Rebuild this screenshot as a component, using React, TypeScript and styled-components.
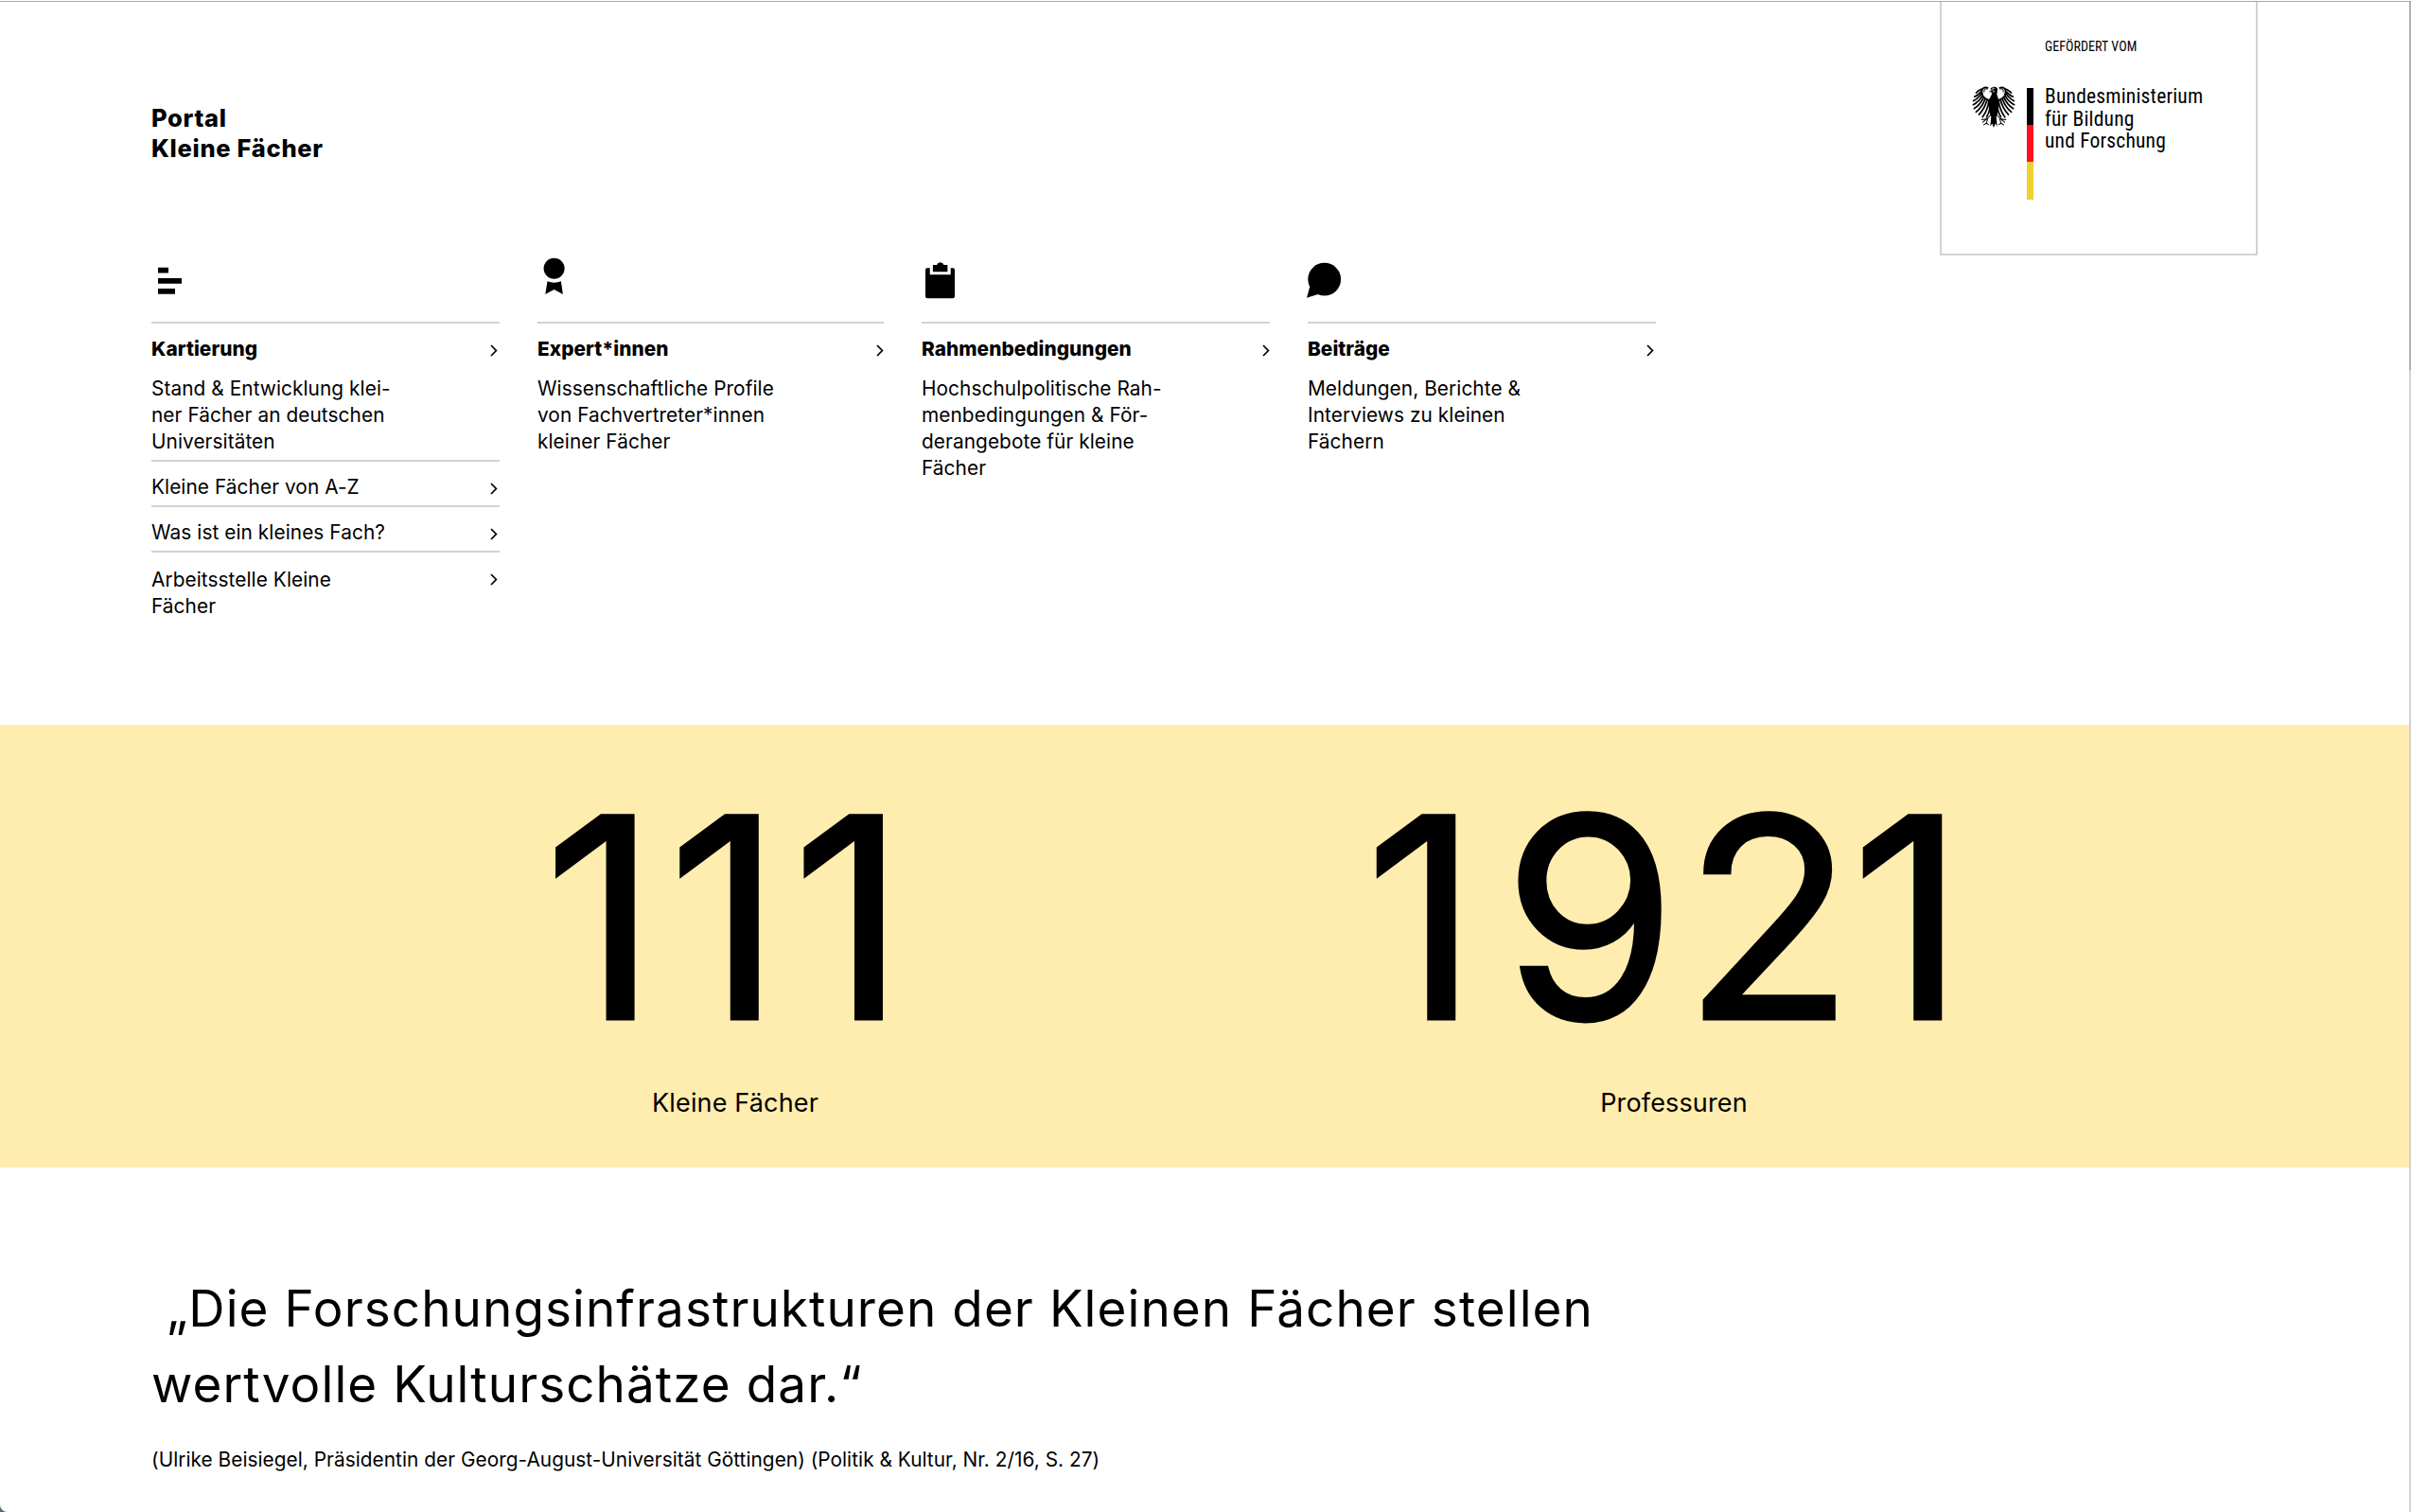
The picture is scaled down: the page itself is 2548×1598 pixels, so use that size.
import React from "react";
import styled, { createGlobalStyle } from "styled-components";

const RULE = "#d2d2d2";

const GlobalStyle = createGlobalStyle`
  *, *::before, *::after { box-sizing: border-box; }
  body {
    margin: 0;
    background: #fff;
    color: #000;
    font-family: Inter, "Liberation Sans", sans-serif;
    font-size: 20.8px;
    line-height: 28px;
    overflow: hidden;
  }
  h1, h2, p, blockquote, figure { margin: 0; font: inherit; }
`;

const Page = styled.div`
  position: relative;
  width: 2548px;
  height: 1598px;
  padding-top: 1px;
  overflow: hidden;
`;

const Header = styled.header`
  display: flex;
  justify-content: space-between;
  height: 765px;
  padding: 0 162px 0 160px;
  border-top: 1px solid #ababab;
`;

const HeaderMain = styled.div`
  width: 1590px;
  padding-top: 107px;
`;

const Brand = styled.h1`
  font-weight: 800;
  font-size: 25.5px;
  line-height: 32px;
  letter-spacing: 0.7px;
`;

const Nav = styled.nav`
  display: grid;
  grid-template-columns: 368px 366px 368px 368px;
  column-gap: 40px;
  align-items: start;
  margin-top: 97px;
`;

const IconSlot = styled.div`
  height: 70px;

  svg { display: block; overflow: visible; }
`;

const Entry = styled.a<{ $tall?: boolean }>`
  display: grid;
  grid-template-columns: 290px auto;
  justify-content: space-between;
  border-top: 2px solid ${RULE};
  padding: ${(p) => (p.$tall ? 15 : 13)}px 0 5px;
  letter-spacing: 0.08px;
`;

const EntryTitle = styled.h2`
  font-weight: 800;
  letter-spacing: 0.05px;
`;

const EntryText = styled.p`
  grid-column: 1;
  margin-top: 14px;
  white-space: nowrap;
`;

const Chevron = styled.svg<{ $tall?: boolean; $inset: number }>`
  margin: ${(p) => (p.$tall ? 7 : 9)}px ${(p) => p.$inset}px 0 0;
`;

const FunderBox = styled.aside`
  display: flex;
  width: 336px;
  height: 268px;
  padding-left: 32px;
  border: 2px solid ${RULE};
  border-top: 0;
`;

const EagleSlot = styled.div`
  width: 58px;
  padding-top: 89px;
`;

const FlagBar = styled.div`
  width: 7px;
  height: 118px;
  margin-top: 91px;
  background: linear-gradient(#000 0 39px, #ff0f1e 39px 78px, #efd22d 78px);
`;

const FunderText = styled.div`
  margin: 39px 0 0 12px;
  font-family: "Roboto Condensed", "Liberation Sans Narrow", sans-serif;
`;

const FunderLead = styled.p`
  font-size: 14px;
  line-height: 16px;
  letter-spacing: 0.05px;
`;

const FunderName = styled.p`
  margin-top: 33px;
  font-size: 21.5px;
  line-height: 23.6px;
  letter-spacing: 0.2px;
`;

const Stats = styled.section`
  display: grid;
  grid-template-columns: 992px 992px;
  height: 468px;
  padding: 53px 0 0 281px;
  background: #ffedaf;
  text-align: center;
`;

const Figure = styled.p<{ $shift: number }>`
  padding-right: ${(p) => p.$shift}px;
  font-size: 296px;
  line-height: 300px;
  font-kerning: none;
  -webkit-text-stroke: 3px #000;
`;

const Digit = styled.span<{ $gap: number }>`
  letter-spacing: ${(p) => p.$gap}px;
`;

const StatLabel = styled.p`
  margin-top: 27px;
  font-size: 27px;
  line-height: 40px;
  letter-spacing: 0.15px;
`;

const Quote = styled.section`
  padding: 109px 0 0 160px;
`;

const QuoteText = styled.blockquote`
  font-size: 53px;
  line-height: 80px;
  letter-spacing: 1.08px;
`;

const QuoteSource = styled.p`
  margin-top: 26px;
  letter-spacing: 0.045px;
`;

const ScrollTrack = styled.div`
  position: absolute;
  top: 2px;
  right: 0;
  bottom: 0;
  width: 2px;
  background: ${RULE};
`;

const ScrollThumb = styled.div`
  height: 389px;
  background: #b2b2b2;
`;

const WindowCorner = styled.div`
  position: absolute;
  left: 0;
  bottom: 0;
  width: 8px;
  height: 8px;
  background: radial-gradient(circle at 100% 0, transparent 7.5px, #5f6a78 8.5px);
`;

const BarsIcon = () => (
  <svg width="40" height="50" viewBox="0 0 40 50">
    <path d="M7 12.8h11v5.8H7zM7 23.9h25v5.8H7zM7 35h18v5.7H7z" />
  </svg>
);

const AwardIcon = () => (
  <svg width="40" height="50" viewBox="0 0 40 50">
    <circle cx="17.6" cy="13.8" r="11" />
    <path d="M10.5 27.3q7.1 2.8 14.4 0l2 13.8-9.3-5-9.3 5z" />
  </svg>
);

const ClipboardIcon = () => (
  <svg width="40" height="50" viewBox="0 0 40 50">
    <path d="M5.8 13.2h2.9v7h22v-7H33a2 2 0 0 1 2 2v28a2 2 0 0 1-2 2H6a2 2 0 0 1-2-2v-28a2 2 0 0 1 1.8-2z" />
    <path d="M11.9 10h4.2a3.9 4 0 0 1 7.4 0h3.9v7.2H11.9z" />
  </svg>
);

const BubbleIcon = () => (
  <svg width="40" height="50" viewBox="0 0 40 50">
    <circle cx="17.7" cy="25.2" r="17.4" />
    <path d="M2.4 32.5L-1 44.8l12-3.8z" />
  </svg>
);

const EagleWing = () => (
  <g fill="none" stroke="#000" strokeLinecap="round">
    <path d="M49 5C38 1 30 8 31 19 32 36 46 45 62 45" strokeWidth="5" />
    <path d="M49 9C42 6 37 10 38 18" strokeWidth="3" />
    <path
      strokeWidth="5"
      d="M31 9C22 11 18 18 13 21M30 16C22 24 16 31 8 33M30 23C22 34 14 42 5 46M32 30C26 42 16 52 4 58M36 35C30 50 20 62 7 70M41 39C36 56 26 70 13 81M47 42C43 60 34 76 22 89M53 44C51 64 44 82 33 97M58 46C58 66 54 84 46 96"
    />
    <path
      strokeWidth="3"
      d="M60 88C53 98 47 103 38 104M48 101L34 113M49 102L45 117M45 103L30 105M45 116l-8 5M45 116l7 4"
    />
  </g>
);

const Eagle = () => (
  <svg width="46" height="44" viewBox="0 0 136 130">
    <EagleWing />
    <g transform="translate(136 0) scale(-1 1)">
      <EagleWing />
    </g>
    <path d="M58 7C64 0 78 0 80 9L78 26 84 44C86 62 82 82 76 96L79 126 73 117 68 130 63 117 57 126 60 96C54 82 50 62 52 44L62 26 60 17 52 20 59 13z" />
    <path d="M57 12l12-1M62 6l9 1M64 18l8-2" stroke="#fff" strokeWidth="2" />
  </svg>
);

type NavEntry = { text: string; tall?: boolean };
type NavColumn = {
  icon: React.ReactNode;
  title: string;
  lines: string[];
  inset: number;
  links?: NavEntry[];
};

const columns: NavColumn[] = [
  {
    icon: <BarsIcon />,
    title: "Kartierung",
    lines: ["Stand & Entwicklung klei-", "ner Fächer an deutschen", "Universitäten"],
    inset: 2,
    links: [
      { text: "Kleine Fächer von A-Z" },
      { text: "Was ist ein kleines Fach?" },
      { text: "Arbeitsstelle Kleine\nFächer", tall: true },
    ],
  },
  {
    icon: <AwardIcon />,
    title: "Expert*innen",
    lines: ["Wissenschaftliche Profile", "von Fachvertreter*innen", "kleiner Fächer"],
    inset: 0,
  },
  {
    icon: <ClipboardIcon />,
    title: "Rahmenbedingungen",
    lines: [
      "Hochschulpolitische Rah-",
      "menbedingungen & För-",
      "derangebote für kleine",
      "Fächer",
    ],
    inset: 0,
  },
  {
    icon: <BubbleIcon />,
    title: "Beiträge",
    lines: ["Meldungen, Berichte &", "Interviews zu kleinen", "Fächern"],
    inset: 2,
  },
];

const Arrow = ({ tall, inset }: { tall?: boolean; inset: number }) => (
  <Chevron $tall={tall} $inset={inset} width="8" height="13" viewBox="0 0 8 13">
    <path d="M1 1l5.4 5.5L1 12" fill="none" stroke="#000" strokeWidth="1.7" />
  </Chevron>
);

const Lines = ({ lines }: { lines: string[] }) => (
  <>
    {lines.map((line, i) => (
      <React.Fragment key={line}>
        {i > 0 && <br />}
        {line}
      </React.Fragment>
    ))}
  </>
);

export default function App() {
  return (
    <Page>
      <GlobalStyle />
      <Header>
        <HeaderMain>
          <Brand>
            Portal
            <br />
            Kleine Fächer
          </Brand>
          <Nav>
            {columns.map((col) => (
              <div key={col.title}>
                <IconSlot>{col.icon}</IconSlot>
                <Entry>
                  <EntryTitle>{col.title}</EntryTitle>
                  <Arrow inset={col.inset} />
                  <EntryText>
                    <Lines lines={col.lines} />
                  </EntryText>
                </Entry>
                {col.links?.map((link) => (
                  <Entry key={link.text} $tall={link.tall}>
                    <span>
                      <Lines lines={link.text.split("\n")} />
                    </span>
                    <Arrow tall={link.tall} inset={col.inset} />
                  </Entry>
                ))}
              </div>
            ))}
          </Nav>
        </HeaderMain>
        <FunderBox>
          <EagleSlot>
            <Eagle />
          </EagleSlot>
          <FlagBar />
          <FunderText>
            <FunderLead>GEFÖRDERT VOM</FunderLead>
            <FunderName>
              <Lines lines={["Bundesministerium", "für Bildung", "und Forschung"]} />
            </FunderName>
          </FunderText>
        </FunderBox>
      </Header>

      <Stats>
        <div>
          <Figure $shift={11}>
            <Digit $gap={10.8}>111</Digit>
          </Figure>
          <StatLabel>Kleine Fächer</StatLabel>
        </div>
        <div>
          <Figure $shift={8}>
            <Digit $gap={25.5}>1</Digit>
            <Digit $gap={7}>9</Digit>
            <Digit $gap={-3}>2</Digit>
            <Digit $gap={10.8}>1</Digit>
          </Figure>
          <StatLabel>Professuren</StatLabel>
        </div>
      </Stats>

      <Quote>
        <QuoteText>
          {"\u00a0„Die Forschungsinfrastrukturen der Kleinen Fächer stellen"}
          <br />
          wertvolle Kulturschätze dar.“
        </QuoteText>
        <QuoteSource>
          (Ulrike Beisiegel, Präsidentin der Georg-August-Universität Göttingen) (Politik &amp;
          Kultur, Nr. 2/16, S. 27)
        </QuoteSource>
      </Quote>

      <ScrollTrack>
        <ScrollThumb />
      </ScrollTrack>
      <WindowCorner />
    </Page>
  );
}
